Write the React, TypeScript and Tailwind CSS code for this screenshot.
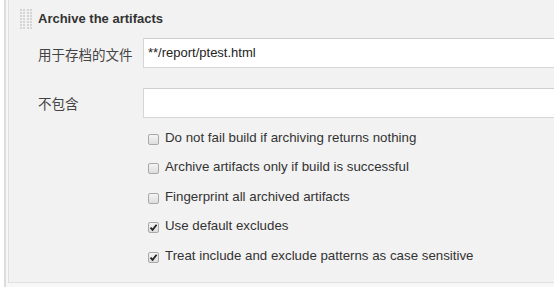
import React from 'react';

const options = [
  { label: 'Do not fail build if archiving returns nothing', checked: false },
  { label: 'Archive artifacts only if build is successful', checked: false },
  { label: 'Fingerprint all archived artifacts', checked: false },
  { label: 'Use default excludes', checked: true },
  { label: 'Treat include and exclude patterns as case sensitive', checked: true },
];

const Grip = () => (
  <div className="grid grid-cols-4 gap-[1px] w-[12px] h-[20px] mr-[6px]">
    {Array.from({ length: 28 }).map((_, i) => (
      <span key={i} className="w-[2px] h-[2px] bg-[#d4d4d4]" />
    ))}
  </div>
);

const Checkbox = ({ checked }: { checked: boolean }) => (
  <span className="w-[11px] h-[11px] border border-[#a9a9a9] rounded-[2px] bg-gradient-to-b from-[#f4f4f4] to-[#dedede] flex items-center justify-center">
    {checked && (
      <svg width="9" height="9" viewBox="0 0 9 9">
        <path d="M1.5 4.6 L3.6 6.8 L7.6 1.8" stroke="#222" strokeWidth="1.8" fill="none" />
      </svg>
    )}
  </span>
);

const App = () => {
  return (
    <div
      className="w-[554px] h-[287px] bg-white overflow-hidden text-[#333]"
      style={{ fontFamily: '"Liberation Sans", Arial, "Noto Sans CJK SC", sans-serif' }}
    >
      <div className="h-full ml-[4px] border-l-[2px] border-[#dcdcdc] bg-[#f7f7f7] pl-[2px]">
        <div className="h-[283px] border-l border-b border-[#e0e0e0] bg-[#f2f2f2]">
          <div className="flex items-center h-[32px] pl-[11px] pt-[6px]">
            <Grip />
            <span className="font-bold text-[13px] text-[#333]">Archive the artifacts</span>
          </div>

          <div className="flex items-center mt-[6px] h-[30px]">
            <span className="w-[134px] pl-[29px] text-[13.5px] text-[#444] pt-[2px]" style={{ fontFamily: '"Noto Sans CJK SC", sans-serif' }}>
              用于存档的文件
            </span>
            <div className="flex-1 h-[30px] bg-white border border-[#d6d6d6] border-t-[#cfcfcf] -mr-[10px] flex items-center px-[4px] text-[13px] text-[#222]">
              **/report/ptest.html
            </div>
          </div>

          <div className="flex items-center mt-[20px] h-[30px]">
            <span className="w-[134px] pl-[29px] text-[13.5px] text-[#444]" style={{ fontFamily: '"Noto Sans CJK SC", sans-serif' }}>
              不包含
            </span>
            <div className="flex-1 h-[30px] bg-white border border-[#d6d6d6] border-t-[#cfcfcf] -mr-[10px]" />
          </div>

          <div className="flex flex-col mt-[5px] pl-[139px]">
            {options.map((o) => (
              <div key={o.label} className="flex items-center h-[29.5px] gap-[6px] text-[13.3px] text-[#333]">
                <span className="mt-[3px]">
                  <Checkbox checked={o.checked} />
                </span>
                <span>{o.label}</span>
              </div>
            ))}
          </div>
        </div>
      </div>
    </div>
  );
};

export default App;
